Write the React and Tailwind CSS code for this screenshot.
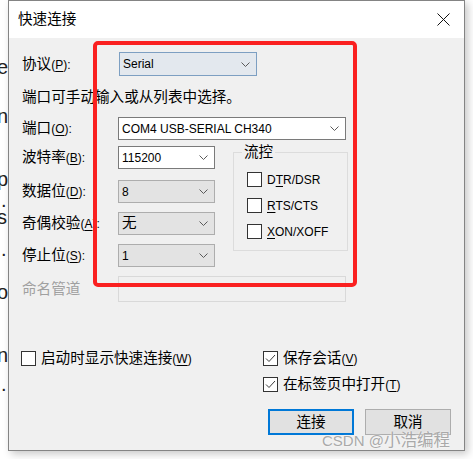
import React from "react";

const Zh = ({ children, className = "" }) => (
  <span className={`text-[14.6px] ${className}`}>{children}</span>
);

const Key = ({ children }) => (
  <span className="underline underline-offset-[2px]">{children}</span>
);

const Chevron = () => (
  <svg width="9" height="5" viewBox="0 0 9 5" className="shrink-0">
    <path d="M0.5 0.5 L4.5 4.5 L8.5 0.5" fill="none" stroke="#5a5a5a" strokeWidth="1" />
  </svg>
);

const tones = {
  hover: "bg-[#e3e8ee] border-[#7d9fc2]",
  white: "bg-white border-[#7a7a7a]",
  gray: "bg-[#e3e3e3] border-[#adadad]",
};

function Combo({ children, tone, className }) {
  return (
    <div
      className={`flex items-center justify-between border pl-[3px] pr-[6px] ${tones[tone]} ${className}`}
    >
      <span className="leading-none">{children}</span>
      <Chevron />
    </div>
  );
}

function Check({ checked }) {
  return (
    <div className="w-[15px] h-[15px] shrink-0 border border-[#333333] bg-white flex items-center justify-center">
      {checked && (
        <svg width="13" height="13" viewBox="0 0 13 13">
          <path d="M2 6.5 L5 9.5 L11 3" fill="none" stroke="#3c3c3c" strokeWidth="1" />
        </svg>
      )}
    </div>
  );
}

function Row({ label, children, className = "" }) {
  return (
    <div className={`flex items-center ${className}`}>
      <div className="w-[96px] leading-none">{label}</div>
      {children}
    </div>
  );
}

// letters of the window lying under the dialog
const behind = [
  ["e", 61, -3],
  ["n", 110, -3],
  ["p", 173, -3],
  [".", 194, 1],
  ["s", 211, -3],
  [".", 243, 1],
  ["o", 286, -3],
  ["n", 349, -3],
  [".", 378, 1],
];

export default function App() {
  return (
    <div className="relative w-[473px] h-[459px] bg-white overflow-hidden font-['Liberation_Sans','Noto_Sans_CJK_SC',sans-serif] text-[12px] text-black">
      {behind.map(([c, top, left], i) => (
        <span
          key={i}
          className="absolute text-[20px] leading-[12px] text-[#222]"
          style={{ top, left }}
        >
          {c}
        </span>
      ))}

      <div className="relative ml-[8px] w-[457px] h-[451px] border border-[#848484] bg-[#f0f0f0] shadow-[3px_3px_8px_rgba(0,0,0,0.22)] flex flex-col">
        {/* title bar */}
        <div className="h-[37px] bg-white flex items-center justify-between pl-[9px] pr-[14px]">
          <Zh className="leading-none">快速连接</Zh>
          <svg width="13" height="13" viewBox="0 0 13 13">
            <path d="M0.5 0.5 L12.5 12.5 M12.5 0.5 L0.5 12.5" stroke="#111" strokeWidth="1" />
          </svg>
        </div>

        <div className="flex flex-col pl-[13px]">
          <Row
            className="mt-[14px]"
            label={<><Zh>协议</Zh>(<Key>P</Key>):</>}
          >
            <Combo tone="hover" className="ml-[1px] w-[138px] h-[24px]">Serial</Combo>
          </Row>

          <div className="mt-[12px] h-[20px] flex items-center">
            <Zh>端口可手动输入或从列表中选择。</Zh>
          </div>

          <Row className="mt-[9px]" label={<><Zh>端口</Zh>(<Key>O</Key>):</>}>
            <Combo tone="white" className="w-[228px] h-[23px]">COM4 USB-SERIAL CH340</Combo>
          </Row>

          <div className="mt-[6px] flex">
            <div className="flex flex-col">
              <Row label={<><Zh>波特率</Zh>(<Key>B</Key>):</>}>
                <Combo tone="white" className="w-[97px] h-[23px]">115200</Combo>
              </Row>
              <Row className="mt-[11px]" label={<><Zh>数据位</Zh>(<Key>D</Key>):</>}>
                <Combo tone="gray" className="w-[97px] h-[23px]">8</Combo>
              </Row>
              <Row className="mt-[9px]" label={<><Zh>奇偶校验</Zh>(<Key>A</Key>):</>}>
                <Combo tone="gray" className="w-[97px] h-[23px]">
                  <Zh>无</Zh>
                </Combo>
              </Row>
              <Row className="mt-[9px]" label={<><Zh>停止位</Zh>(<Key>S</Key>):</>}>
                <Combo tone="gray" className="w-[97px] h-[23px]">1</Combo>
              </Row>
            </div>

            {/* 流控 group */}
            <div className="relative ml-[18px] mt-[6px] w-[115px] h-[99px] border border-[#dcdcdc] flex flex-col gap-[11px] pl-[13px] pt-[19px]">
              <div className="absolute left-[8px] top-[-11px] px-[2px] bg-[#f0f0f0] leading-[20px]">
                <Zh>流控</Zh>
              </div>
              {[
                ["D", "T", "R/DSR"],
                ["", "R", "TS/CTS"],
                ["", "X", "ON/XOFF"],
              ].map(([a, k, b], i) => (
                <div key={i} className="flex items-center gap-[5px]">
                  <Check />
                  <span className="leading-none">
                    {a}
                    <Key>{k}</Key>
                    {b}
                  </span>
                </div>
              ))}
            </div>
          </div>

          <Row className="mt-[9px]" label={<Zh className="text-[#a0a0a0]">命名管道</Zh>}>
            <div className="w-[228px] h-[26px] border border-[#d9d9d9] bg-[#f0f0f0]" />
          </Row>
        </div>

        <div className="flex flex-col pl-[12px]">
          <div className="mt-[49px] flex items-center">
            <div className="w-[242px] flex items-center gap-[5px]">
              <Check />
              <span className="leading-none">
                <Zh>启动时显示快速连接</Zh>(<Key>W</Key>)
              </span>
            </div>
            <div className="flex items-center gap-[5px]">
              <Check checked />
              <span className="leading-none">
                <Zh>保存会话</Zh>(<Key>V</Key>)
              </span>
            </div>
          </div>
          <div className="mt-[11px] ml-[242px] flex items-center gap-[5px]">
            <Check checked />
            <span className="leading-none">
              <Zh>在标签页中打开</Zh>(<Key>T</Key>)
            </span>
          </div>
        </div>

        <div className="mt-[17px] flex justify-end gap-[11px] pr-[13px]">
          <button className="w-[86px] h-[26px] border-2 border-[#0078d7] bg-[#e1e1e1] flex items-center justify-center">
            <Zh className="leading-none">连接</Zh>
          </button>
          <button className="w-[86px] h-[26px] border border-[#adadad] bg-[#e1e1e1] flex items-center justify-center">
            <Zh className="leading-none">取消</Zh>
          </button>
        </div>
      </div>

      {/* red annotation */}
      <div className="absolute left-[93px] top-[41px] w-[264px] h-[246px] border-[4px] border-[#fa2020] rounded-[5px]" />

      {/* watermark */}
      <div className="absolute left-[322px] top-[430px] text-[#a9a9a9] leading-[20px] whitespace-nowrap [text-shadow:0_0_2px_#fff]">
        <span className="text-[15px]">CSDN @</span>
        <span className="text-[16.5px]">小浩编程</span>
      </div>
    </div>
  );
}
